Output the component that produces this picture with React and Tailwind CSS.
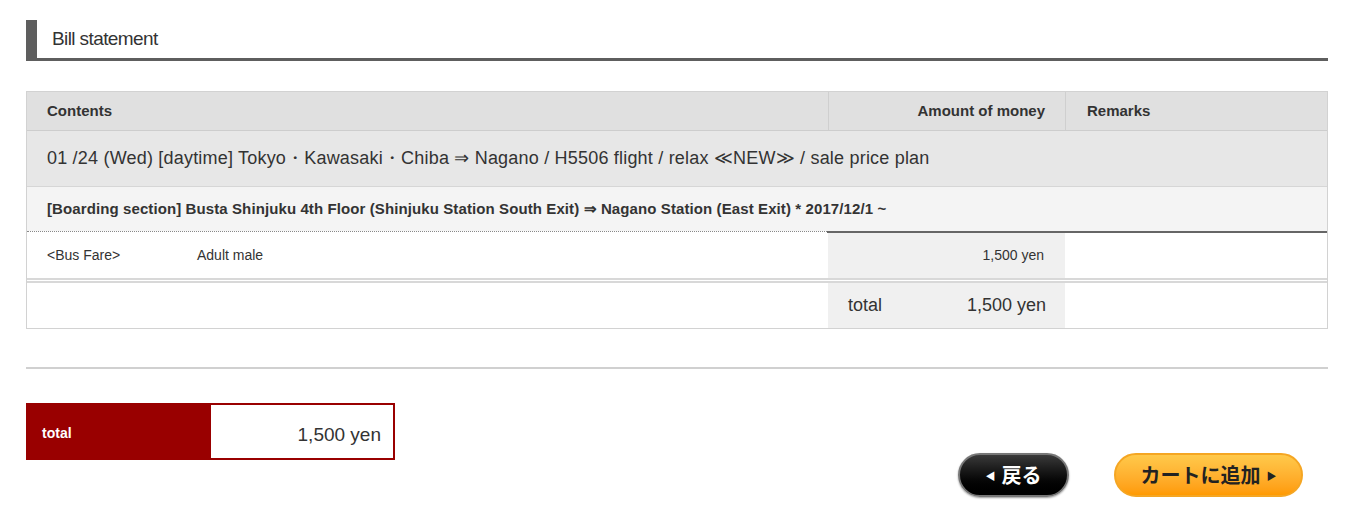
export default function App() {
  return (
    <div className="min-h-[519px] bg-white px-[26px] pt-[20px] pr-[34px] text-[#333]" style={{ fontFamily: '"Liberation Sans", Arial, sans-serif' }}>
      {/* heading */}
      <div className="flex h-[41px] items-center border-b-[3px] border-[#5e5e5e] border-l-[11px] pl-[15px]">
        <h2 className="text-[19px] tracking-[-0.6px]">Bill statement</h2>
      </div>

      {/* detail table */}
      <div className="mt-[30px] border border-[#d2d2d2]">
        <div className="flex h-[38px] bg-[#e0e0e0] text-[15px] font-bold">
          <div className="flex flex-1 items-center pl-[20px]">Contents</div>
          <div className="flex w-[237px] items-center justify-end border-l border-[#cfcfcf] pr-[20px]">Amount of money</div>
          <div className="flex w-[262px] items-center border-l border-[#cfcfcf] pl-[21px]">Remarks</div>
        </div>
        <div className="flex h-[56px] items-center border-t border-[#cdcdcd] bg-[#e7e7e7] pl-[20px] text-[18px] tracking-[0.2px]">
          01 /24 (Wed) [daytime] Tokyo・Kawasaki・Chiba ⇒ Nagano / H5506 flight / relax ≪NEW≫ / sale price plan
        </div>
        <div className="flex h-[45px] items-center border-t border-[#d6d6d6] bg-[#f4f4f4] pl-[20px] text-[15px] font-bold tracking-[0.1px]">
          [Boarding section] Busta Shinjuku 4th Floor (Shinjuku Station South Exit) ⇒ Nagano Station (East Exit) * 2017/12/1 ~
        </div>
        <div className="flex">
          <div className="flex-1 border-t border-dotted border-[#888]" />
          <div className="w-[500px] border-t-2 border-[#666]" />
        </div>
        <div className="flex h-[45px] text-[14px]">
          <div className="flex flex-1 items-center">
            <span className="w-[170px] pl-[20px]">&lt;Bus Fare&gt;</span>
            <span>Adult male</span>
          </div>
          <div className="flex w-[237px] items-center justify-end bg-[#f0f0f0] pr-[21px] text-[14px]">1,500 yen</div>
          <div className="w-[262px]" />
        </div>
        <div className="h-[5px] border-y-[2px] border-[#d8d8d8] bg-white" />
        <div className="flex h-[45px]">
          <div className="flex-1" />
          <div className="flex w-[237px] items-center justify-between bg-[#f0f0f0] pl-[20px] pr-[19px] text-[18px]">
            <span>total</span>
            <span>1,500 yen</span>
          </div>
          <div className="w-[262px]" />
        </div>
      </div>

      <div className="mt-[38px] h-[2px] bg-[#d0d0d0]" />

      {/* grand total + buttons */}
      <div className="mt-[34px] flex items-start">
        <div className="flex h-[57px] w-[369px] bg-[#990000]">
          <div className="flex w-[185px] items-center pl-[16px] pt-[3px] text-[14px] font-bold text-white">total</div>
          <div className="my-[2px] mr-[2px] flex flex-1 items-center justify-end bg-white pr-[12px] pt-[8px] text-[19px]">1,500 yen</div>
        </div>
        <div className="ml-auto mr-[25px] mt-[50px] flex gap-[45px]" style={{ fontFamily: '"Noto Sans CJK JP", sans-serif' }}>
          <button className="flex h-[44px] w-[111px] items-center justify-center gap-[6px] rounded-full border-2 border-[#777] bg-gradient-to-b from-[#3a3a3a] to-black text-[20px] font-bold text-white shadow-[0_1px_2px_rgba(0,0,0,0.4)]">
            <span className="text-[10px]">◀</span>
            <span>戻る</span>
          </button>
          <button className="flex h-[44px] w-[189px] items-center justify-center gap-[6px] rounded-full border-2 border-[#f5a623] bg-gradient-to-b from-[#ffc94a] to-[#ff9a00] text-[20px] font-bold text-[#222]">
            <span>カートに追加</span>
            <span className="text-[10px]">▶</span>
          </button>
        </div>
      </div>
    </div>
  );
}
